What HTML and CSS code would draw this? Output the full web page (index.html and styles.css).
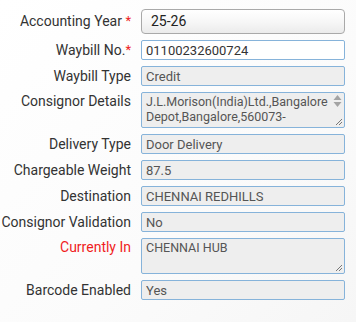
FILE: index.html
```html
<!DOCTYPE html>
<html>
<head>
<meta charset="utf-8">
<link rel="stylesheet" href="styles.css">
</head>
<body>
<form class="form">
  <label class="lbl lbl-select">Accounting Year&nbsp;<span class="req">*</span></label>
  <div class="select">25-26</div>

  <label class="lbl">Waybill No.<span class="req">*</span></label>
  <input class="field field-edit" type="text" value="01100232600724">

  <label class="lbl">Waybill Type</label>
  <input class="field" type="text" value="Credit" readonly>

  <label class="lbl lbl-area">Consignor Details</label>
  <div class="area">
    <div class="area-text">J.L.Morison(India)Ltd.,Bangalore Depot,Bangalore,560073-</div>
    <div class="spin">
      <svg width="9" height="14" viewBox="0 0 9 14"><path d="M4.5 1 L8.5 6 H0.5 Z" fill="#a3a3a3"/><path d="M0.5 8 H8.5 L4.5 13 Z" fill="#a3a3a3"/></svg>
    </div>
    <svg class="grip" width="8" height="8" viewBox="0 0 8 8"><path d="M1 7 L7 1 M4 7 L7 4" stroke="#777" stroke-width="1"/></svg>
  </div>

  <label class="lbl">Delivery Type</label>
  <input class="field" type="text" value="Door Delivery" readonly>

  <label class="lbl">Chargeable Weight</label>
  <input class="field" type="text" value="87.5" readonly>

  <label class="lbl">Destination</label>
  <input class="field" type="text" value="CHENNAI REDHILLS" readonly>

  <label class="lbl">Consignor Validation</label>
  <input class="field" type="text" value="No" readonly>

  <label class="lbl lbl-area lbl-red">Currently In</label>
  <div class="area">
    <div class="area-text">CHENNAI HUB</div>
    <svg class="grip" width="8" height="8" viewBox="0 0 8 8"><path d="M1 7 L7 1 M4 7 L7 4" stroke="#777" stroke-width="1"/></svg>
  </div>

  <label class="lbl">Barcode Enabled</label>
  <input class="field" type="text" value="Yes" readonly>
</form>
</body>
</html>
```

FILE: styles.css
```css
html, body {
  margin: 0;
  padding: 0;
}
body {
  width: 356px;
  height: 322px;
  background: linear-gradient(135deg, #ffffff 0%, #fbfbfb 60%, #f6f6f6 100%);
  font-family: Roboto, "Liberation Sans", sans-serif;
  overflow: hidden;
}
.form {
  display: grid;
  grid-template-columns: 131px 204px;
  column-gap: 10px;
  row-gap: 6px;
  padding: 9px 0 0 0;
}
.lbl {
  display: flex;
  justify-content: flex-end;
  font-size: 14px;
  line-height: 20px;
  color: #333;
  white-space: pre;
  align-self: start;
}
.lbl-select {
  line-height: 24px;
}
.lbl-area {
  line-height: 18px;
}
.lbl-red {
  color: #f01d1d;
}
.req {
  color: #e22;
  font-size: 13px;
}
.select {
  box-sizing: border-box;
  height: 25px;
  border: 1px solid #a9a9a9;
  border-radius: 4px;
  background: linear-gradient(#ffffff 0%, #f6f6f6 55%, #ebebeb 100%);
  font-size: 14px;
  line-height: 23px;
  padding-left: 9px;
  color: #222;
}
.field {
  box-sizing: border-box;
  height: 20px;
  width: 204px;
  margin: 0;
  border: 1px solid #86b3da;
  border-radius: 2px;
  background: #eeeeee;
  font-family: Roboto, "Liberation Sans", sans-serif;
  font-size: 13px;
  color: #555;
  padding: 0 4px;
  outline: none;
}
.field-edit {
  background: #ffffff;
  color: #333;
}
.area {
  position: relative;
  box-sizing: border-box;
  height: 36px;
  border: 1px solid #86b3da;
  border-radius: 2px;
  background: #eeeeee;
  display: flex;
}
.area-text {
  flex: 1;
  font-size: 12.5px;
  line-height: 15px;
  color: #555;
  padding: 1px 0 0 4px;
  overflow: hidden;
}
.spin {
  width: 13px;
  display: flex;
  justify-content: center;
  padding-top: 1px;
}
.grip {
  position: absolute;
  right: 1px;
  bottom: 1px;
}
```
